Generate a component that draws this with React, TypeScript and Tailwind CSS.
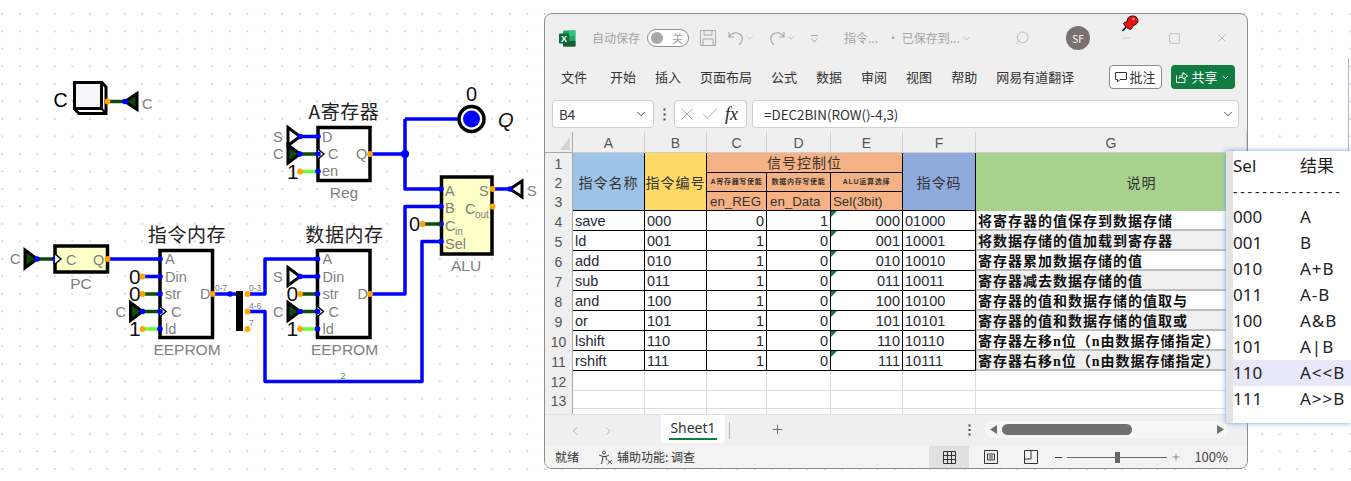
import React from 'react';
import { Check, ChevronDown, ChevronLeft, ChevronRight, Minus, Plus, Search, Square, X } from 'lucide-react';

const BLUE = '#0000ff';
const DARK = '#0b4a0b';
const LIME = '#66ff33';
const ORANGE = '#ffa500';
const GRAY = '#808080';
const CJK = '"Noto Sans CJK SC", sans-serif';
const SANS = '"Liberation Sans", sans-serif';

const Wire = ({ d, color = BLUE }: { d: string; color?: string }) => (
  <path d={d} fill="none" stroke={color} strokeWidth={3.5} strokeLinejoin="round" />
);
const In = ({ x, y }: { x: number; y: number }) => <circle cx={x} cy={y} r={2.8} fill={BLUE} />;
const Out = ({ x, y }: { x: number; y: number }) => <circle cx={x} cy={y} r={2.9} fill={ORANGE} />;
const Label = ({ x, y, t, size = 14.5, fill = GRAY, anchor = 'start', italic = false }: any) => (
  <text x={x} y={y} fontSize={size} fill={fill} textAnchor={anchor} fontFamily={SANS} fontStyle={italic ? 'italic' : 'normal'}>
    {t}
  </text>
);
const Title = ({ x, y, t }: { x: number; y: number; t: string }) => (
  <text x={x} y={y} fontSize={19} fill="#222" fontFamily={CJK} textAnchor="middle" letterSpacing={0.6}>
    {t}
  </text>
);

// gate pointing right, apex on the wire
const GateR = ({ x, y, fill, label }: { x: number; y: number; fill: string; label: string }) => (
  <g>
    <Label x={x - 27} y={y + 5} t={label} />
    <polygon points={`${x - 12},${y - 9} ${x},${y} ${x - 12},${y + 9}`} fill={fill} stroke="#000" strokeWidth={3} />
    <In x={x} y={y} />
  </g>
);
const GateL = ({ x, y, fill, label }: { x: number; y: number; fill: string; label: string }) => (
  <g>
    <polygon points={`${x + 12},${y - 8} ${x},${y} ${x + 12},${y + 8}`} fill={fill} stroke="#000" strokeWidth={3} />
    <In x={x} y={y} />
    <Label x={x + 17} y={y + 7} t={label} />
  </g>
);
const Notch = ({ x, y }: { x: number; y: number }) => (
  <polyline points={`${x},${y - 5} ${x + 6},${y} ${x},${y + 5}`} fill="#fff" stroke="#000" strokeWidth={1.4} />
);

const Eeprom = ({ x, title, din }: { x: number; title: string; din: React.ReactNode }) => (
  <g>
    <Title x={x + 27} y={242} t={title} />
    <rect x={x} y={250.5} width={52.5} height={87} fill="#fff" stroke="#000" strokeWidth={3.5} />
    <Wire d={`M${x - 17.5} 294H${x}`} color={DARK} />
    <Wire d={`M${x - 17.5} 311.5H${x}`} color={DARK} />
    <Wire d={`M${x - 17.5} 329H${x}`} color={LIME} />
    {din}
    <Label x={x - 31} y={301} t="0" size={21} fill="#111" />
    <Label x={x - 31} y={336} t="1" size={21} fill="#111" />
    <Out x={x - 17.5} y={294} />
    <Out x={x - 17.5} y={329} />
    <GateR x={x - 17.5} y={311.5} fill={DARK} label="C" />
    <Notch x={x} y={311.5} />
    {[259, 276.5, 294, 311.5, 329].map((y) => <In key={y} x={x} y={y} />)}
    <Label x={x + 5} y={264} t="A" />
    <Label x={x + 5} y={281.5} t="Din" />
    <Label x={x + 5} y={299} t="str" />
    <Label x={x + 11} y={316.5} t="C" />
    <Label x={x + 5} y={334} t="ld" />
    <Label x={x + 40} y={299} t="D" />
    <Out x={x + 52.5} y={294} />
    <Label x={x + 27} y={355} t="EEPROM" size={15.5} anchor="middle" />
  </g>
);

const Circuit = () => (
  <svg className="absolute left-0 top-0" width={1351} height={481}>
    <defs>
      <pattern id="dots" x={-6.45} y={5.05} width={17.5} height={17.5} patternUnits="userSpaceOnUse">
        <circle cx={8.75} cy={8.75} r={0.85} fill="#b4b4b4" />
      </pattern>
    </defs>
    <rect width={1351} height={481} fill="url(#dots)" />

    {/* clock block */}
    <Label x={53.5} y={107} t="C" size={19.5} fill="#000" />
    <path d="M74.5 82.5H102L106 87V113.5H79L74.5 109Z" fill="#fff" stroke="#000" strokeWidth={3} />
    <path d="M74.5 82.5H101.5V108.5H74.5Z" fill="#f5f5fa" stroke="#000" strokeWidth={3} />
    <path d="M101.5 108.5L106 113.5" stroke="#000" strokeWidth={2} />
    <Wire d="M107 101.5H125" color={DARK} />
    <Out x={107.5} y={101.5} />
    <GateL x={125} y={101.5} fill={DARK} label="C" />

    {/* PC */}
    <Wire d="M37 259H55" color={DARK} />
    <GateR x={37} y={259} fill={DARK} label="C" />
    <rect x={55} y={246} width={52.5} height={26} fill="#ffffc8" stroke="#000" strokeWidth={3.5} />
    <In x={55} y={259} />
    <Notch x={55} y={259} />
    <Label x={66} y={265} t="C" />
    <Label x={93} y={265} t="Q" />
    <Label x={81} y={289} t="PC" size={15.5} anchor="middle" />
    <Wire d="M108 259H160" />
    <Out x={107.5} y={259} />

    {/* wires between memories */}
    <Wire d="M160 276.5H142.5" />
    <Wire d="M212 294H237" />
    <Wire d="M248 294H265V259H317.5" />
    <Wire d="M248 311.5H265V381.5H422V241.5H441" />
    <Wire d="M370 294H405V206.5H441" />
    <Wire d="M370 154H405M405 119H460M405 119V189H441" />
    <Wire d="M492 189H510" />
    <Wire d="M300 276.5H317.5" />
    <Label x={343} y={379} t="2" size={9} fill="#22aa22" anchor="middle" />

    <Eeprom x={160} title="指令内存" din={<g><Label x={129} y={283.5} t="0" size={21} fill="#111" /><Out x={142.5} y={276.5} /></g>} />
    <Eeprom x={317.5} title="数据内存" din={<GateR x={300} y={276.5} fill="#fff" label="S" />} />

    {/* splitter */}
    <rect x={236} y={291} width={7} height={40} fill="#000" />
    <In x={230} y={294} />
    <Out x={247.5} y={294} />
    <Out x={247.5} y={311.5} />
    <Out x={247.5} y={329} />
    <Label x={215} y={291} t="0-7" size={8.5} />
    <Label x={249} y={291} t="0-3" size={8.5} />
    <Label x={249} y={309} t="4-6" size={8.5} />
    <Label x={249} y={326} t="7" size={8.5} />

    {/* register */}
    <Title x={344} y={119} t="A寄存器" />
    <rect x={318} y={127.5} width={52} height={53} fill="#fff" stroke="#000" strokeWidth={3.5} />
    <Wire d="M300 136.5H318" />
    <Wire d="M300 154H318" color={DARK} />
    <Wire d="M300 171.5H318" color={LIME} />
    <GateR x={300} y={136.5} fill="#fff" label="S" />
    <GateR x={300} y={154} fill={DARK} label="C" />
    <Label x={287} y={179} t="1" size={21} fill="#111" />
    <Out x={300} y={171.5} />
    <Notch x={318} y={154} />
    {[136.5, 154, 171.5].map((y) => <In key={y} x={318} y={y} />)}
    <Label x={322} y={142} t="D" />
    <Label x={328} y={159} t="C" />
    <Label x={322} y={176} t="en" />
    <Label x={356} y={159} t="Q" />
    <Out x={370} y={154} />
    <Label x={344} y={198} t="Reg" size={15.5} anchor="middle" />
    <circle cx={405} cy={154} r={4.2} fill={BLUE} />

    {/* output Q */}
    <text x={471.5} y={101} fontSize={20} fontFamily={SANS} textAnchor="middle" fill="#111">0</text>
    <circle cx={471.5} cy={119} r={12.5} fill="#fff" stroke="#000" strokeWidth={3.5} />
    <circle cx={471.5} cy={119} r={8.5} fill={BLUE} />
    <Label x={498} y={127} t="Q" size={20} fill="#111" italic />

    {/* ALU */}
    <rect x={441.5} y={177} width={50.5} height={77} fill="#ffffc8" stroke="#000" strokeWidth={3.5} />
    {[189, 206.5, 224, 241.5].map((y) => <In key={y} x={441} y={y} />)}
    <Wire d="M423 224H441" color={DARK} />
    <Out x={422.5} y={224} />
    <Label x={409} y={231} t="0" size={20} fill="#111" />
    <Label x={445} y={196} t="A" />
    <Label x={445} y={213} t="B" />
    <Label x={445} y={231} t="C" />
    <Label x={455} y={235} t="in" size={10} />
    <Label x={445} y={249} t="Sel" />
    <Label x={479} y={196} t="S" />
    <Label x={465} y={214} t="C" />
    <Label x={475} y={218} t="out" size={10} />
    <Out x={492.5} y={189} />
    <Out x={492.5} y={206.5} />
    <Label x={466} y={271} t="ALU" size={15.5} anchor="middle" />
    <GateL x={510} y={189} fill="#fff" label="S" />
  </svg>
);

const ExcelLogo = () => (
  <svg width={17} height={17} viewBox="0 0 17 17">
    <rect x={4} y={0.5} width={12.5} height={16} rx={1} fill="#21a366" />
    <rect x={10} y={0.5} width={6.5} height={5.3} fill="#33c481" />
    <rect x={4} y={5.8} width={6.2} height={5.4} fill="#107c41" />
    <rect x={10} y={11} width={6.5} height={5.5} fill="#185c37" />
    <rect x={4} y={11.2} width={6.2} height={5.3} fill="#185c37" />
    <rect x={0} y={3.5} width={10} height={10} rx={1} fill="#0f6b3a" />
    <text x={5} y={11.6} fontSize={9} fontWeight={700} fill="#fff" textAnchor="middle" fontFamily={SANS}>X</text>
  </svg>
);

const TitleBar = () => (
  <div className="flex h-[47px] items-center pl-[14px] pr-[18px] pt-[1px] text-[12px] text-[#a3a3a3]">
    <ExcelLogo />
    <span className="ml-[16px]">自动保存</span>
    <div className="ml-[7px] flex h-[18px] w-[42px] items-center justify-between rounded-full border border-[#8f8f8f] bg-white pl-[3px] pr-[5px] text-[11px]">
      <span className="h-[12px] w-[12px] rounded-full bg-[#a8a8a8]" />
      <span>关</span>
    </div>
    <svg className="ml-[11px]" width={16} height={16} viewBox="0 0 16 16" fill="none" stroke="#a8a8a8">
      <path d="M.5.5H15.5V15.5H.5ZM4 .5V5H12V.5M3 15.5V9H13V15.5" />
    </svg>
    <svg className="ml-[12px]" width={16} height={16} viewBox="0 0 16 16" fill="none" stroke="#a8a8a8" strokeWidth={1.2}>
      <path d="M1 2V7H6M1.5 6.5C4 2.5 9 1.5 12.5 4.5C15.5 7.5 14.5 12 11 15" />
    </svg>
    <ChevronDown className="ml-[1px]" size={10} strokeWidth={1.5} />
    <svg className="ml-[14px]" width={16} height={16} viewBox="0 0 16 16" fill="none" stroke="#a8a8a8" strokeWidth={1.2}>
      <path d="M15 2V7H10M14.5 6.5C12 2.5 7 1.5 3.5 4.5C.5 7.5 1.5 12 5 15" />
    </svg>
    <ChevronDown className="ml-[1px]" size={10} strokeWidth={1.5} />
    <svg className="ml-[14px]" width={9} height={9} viewBox="0 0 9 9" fill="none" stroke="#a8a8a8">
      <path d="M1 1.5H8M1.5 4.5L4.5 8L7.5 4.5" />
    </svg>
    <span className="ml-[25px]">指令...</span>
    <span className="ml-[9px]">• 已保存到...</span>
    <ChevronDown className="ml-[1px]" size={11} strokeWidth={1.5} />
    <div className="ml-auto flex items-center">
      <Search className="-scale-x-100" size={16} strokeWidth={1.2} color="#b0b0b0" />
      <span className="ml-[36px] flex h-[24px] w-[24px] items-center justify-center rounded-full bg-[#7a7070] text-[10px] text-white">SF</span>
      <Minus className="ml-[30px]" size={12} strokeWidth={1} color="#999" />
      <Square className="ml-[36px]" size={13} strokeWidth={1} color="#999" />
      <X className="ml-[34px]" size={14} strokeWidth={1} color="#999" />
    </div>
  </div>
);

const Ribbon = () => (
  <div className="flex h-[32px] items-center pl-[16px] pr-[12px] text-[13px] text-[#333]">
    <span className="mr-[23px]">文件</span>
    <div className="flex gap-[19px]">
      {['开始', '插入', '页面布局', '公式', '数据', '审阅', '视图', '帮助', '网易有道翻译'].map((t) => (
        <span key={t}>{t}</span>
      ))}
    </div>
    <div className="ml-auto flex h-[24px] w-[53px] items-center justify-center gap-[2px] rounded-[4px] border border-[#8a8a8a] bg-white text-[#333]">
      <svg width={12} height={12} viewBox="0 0 12 12" fill="none" stroke="#333">
        <path d="M.5 1.5H11.5V8.5H5L2.5 11V8.5H.5Z" />
      </svg>
      批注
    </div>
    <div className="ml-[9px] flex h-[24px] w-[64px] items-center justify-center gap-[3px] rounded-[4px] bg-[#107c41] text-white">
      <svg width={12} height={12} viewBox="0 0 12 12" fill="none" stroke="#fff">
        <path d="M.5 4.5V11.5H9V7M3 7.5C3.5 5 5 4 7 4V1.5L11.5 5L7 8V6C5.5 6 4 6.5 3 7.5Z" />
      </svg>
      共享
      <ChevronDown size={9} strokeWidth={2.5} />
    </div>
  </div>
);

const FormulaBar = () => (
  <div className="flex h-[39px] items-start pl-[7px] pr-[8px] pt-[7px] text-[13.4px] text-[#333]">
    <div className="flex h-[28px] w-[102px] items-center justify-between rounded-[4px] border border-[#d0d0d0] bg-white pl-[6px] pr-[5px]">
      B4
      <ChevronDown size={14} strokeWidth={1.5} />
    </div>
    <div className="flex h-[28px] w-[20px] items-center justify-center">
      <svg width={3} height={13} viewBox="0 0 3 13" fill="#444">
        <rect x={0.5} y={0.5} width={2} height={2} />
        <rect x={0.5} y={5.5} width={2} height={2} />
        <rect x={0.5} y={10.5} width={2} height={2} />
      </svg>
    </div>
    <div className="flex h-[28px] w-[73px] items-center rounded-[4px] border border-[#d0d0d0] bg-white pl-[2px]">
      <X size={20} strokeWidth={1} color="#9a9a9a" />
      <Check className="ml-[3px]" size={20} strokeWidth={1} color="#9a9a9a" />
      <span className="ml-[5px] text-[18px] italic text-[#222] [font-family:'Liberation_Serif',serif]">fx</span>
    </div>
    <div className="ml-[5px] flex h-[28px] flex-1 items-center justify-between rounded-[4px] border border-[#d0d0d0] bg-white pl-[11px] pr-[3px]">
      =DEC2BIN(ROW()-4,3)
      <ChevronDown size={14} strokeWidth={1.5} />
    </div>
  </div>
);

const rows = [
  ['save', '000', '0', '1', '000', '01000', '将寄存器的值保存到数据存储'],
  ['ld', '001', '1', '0', '001', '10001', '将数据存储的值加载到寄存器'],
  ['add', '010', '1', '0', '010', '10010', '寄存器累加数据存储的值'],
  ['sub', '011', '1', '0', '011', '10011', '寄存器减去数据存储的值'],
  ['and', '100', '1', '0', '100', '10100', '寄存器的值和数据存储的值取与'],
  ['or', '101', '1', '0', '101', '10101', '寄存器的值和数据存储的值取或'],
  ['lshift', '110', '1', '0', '110', '10110', '寄存器左移n位（n由数据存储指定）'],
  ['rshift', '111', '1', '0', '111', '10111', '寄存器右移n位（n由数据存储指定）'],
];

const RowNum = ({ n }: { n?: number }) => (
  <div className="flex items-center justify-center border-r border-[#a8a8a8] bg-[#efefef] pt-[2px] text-[14px] text-[#555]">{n}</div>
);
const Corner = () => <span className="absolute left-0 top-0 h-[6px] w-[6px] bg-[#107c41] [clip-path:polygon(0_0,100%_0,0_100%)]" />;

const Sheet = () => {
  const hd = 'flex items-center justify-center border-r border-b border-black text-[#333]';
  const data = 'relative flex items-center border-r border-b border-black px-[2px] pt-[2px] text-[14.5px] leading-none text-[#1f2a33] bg-white';
  const empty = 'border-r border-b border-[#dcdcdc] bg-white';
  return (
    <div className="grid h-[282px] grid-cols-[28px_72px_62px_60px_64px_72px_73px_1fr] grid-rows-[21px_20px_19px_19px_repeat(8,20px)_20px_18px_5px] overflow-hidden [font-family:'Liberation_Sans','Noto_Sans_CJK_SC',sans-serif]">
      <div className="flex items-center justify-end border-r border-b border-[#a8a8a8] bg-[#efefef] pr-[2px]">
        <svg width={10} height={18} viewBox="0 0 10 18"><polygon points="10,4 10,17 0,17" fill="#d4d4d4" /></svg>
      </div>
      {['A', 'B', 'C', 'D', 'E', 'F', 'G'].map((c) => (
        <div key={c} className="flex items-center justify-center border-r border-b border-[#d0d0d0] bg-[#efefef] pt-[2px] text-[14px] text-[#555]">{c}</div>
      ))}

      <RowNum n={1} />
      <div className={`${hd} row-span-3 bg-[#9dc3e6] pt-[3px] text-[14px] tracking-[1px]`}>指令名称</div>
      <div className={`${hd} row-span-3 bg-[#ffd966] pt-[3px] text-[14px] tracking-[1px]`}>指令编号</div>
      <div className={`${hd} col-span-3 bg-[#f4b183] pt-[2px] text-[14px] tracking-[1px]`}>信号控制位</div>
      <div className={`${hd} row-span-3 bg-[#8faadc] pt-[3px] text-[14px] tracking-[1px]`}>指令码</div>
      <div className="row-span-3 flex items-center justify-center bg-[#a9d18e] pl-[60px] pt-[3px] text-[14px] tracking-[1px] text-[#333]">说明</div>

      <RowNum n={2} />
      <div className={`${hd} bg-[#f4b183] text-[7px] font-bold tracking-[0.7px]`}>A寄存器写使能</div>
      <div className={`${hd} bg-[#f4b183] text-[7px] font-bold tracking-[0.7px]`}>数据内存写使能</div>
      <div className={`${hd} bg-[#f4b183] text-[7px] font-bold tracking-[0.7px]`}>ALU运算选择</div>

      <RowNum n={3} />
      <div className={`${hd} justify-start bg-[#f4b183] pl-[3px] pt-[2px] text-[13.3px]`}>en_REG</div>
      <div className={`${hd} justify-start bg-[#f4b183] pl-[3px] pt-[2px] text-[13.3px]`}>en_Data</div>
      <div className={`${hd} justify-start bg-[#f4b183] pl-[2px] pt-[2px] text-[13.3px]`}>Sel(3bit)</div>

      {rows.map((r, i) => (
        <React.Fragment key={r[0]}>
          <RowNum n={i + 4} />
          <div className={data}>{r[0]}</div>
          <div className={data}>{r[1]}</div>
          <div className={`${data} justify-end`}>{r[2]}</div>
          <div className={`${data} justify-end`}>{r[3]}</div>
          <div className={`${data} justify-end`}><Corner />{r[4]}</div>
          <div className={data}>{r[5]}</div>
          <div className={`flex items-center whitespace-nowrap border-b-2 border-l border-[#bdbdbd] pl-[1px] pt-[2px] text-[14px] font-bold tracking-[1px] text-[#111] [font-family:'Liberation_Serif','Noto_Sans_CJK_SC',serif] ${i % 2 ? 'bg-[#f0f0f0]' : 'bg-white'}`}>
            {r[6]}
          </div>
        </React.Fragment>
      ))}

      {[12, 13].map((n) => (
        <React.Fragment key={n}>
          <RowNum n={n} />
          {[0, 1, 2, 3, 4, 5, 6].map((c) => <div key={c} className={empty} />)}
        </React.Fragment>
      ))}
      <RowNum />
      {[0, 1, 2, 3, 4, 5, 6].map((c) => <div key={c} className="border-r border-[#dcdcdc] bg-white" />)}
    </div>
  );
};

const TabBar = () => (
  <div className="flex h-[32px] items-start border-t border-[#e2e2e2] bg-[#efefef]">
    <ChevronLeft className="ml-[23px] mt-[9px]" size={14} strokeWidth={1.2} color="#999" />
    <ChevronRight className="ml-[19px] mt-[9px]" size={14} strokeWidth={1.2} color="#999" />
    <div className="relative ml-[46px] flex h-[28px] w-[64px] items-start justify-center rounded-b-[4px] bg-white pt-[2px] text-[14px] text-[#333] [font-family:'Noto_Sans',sans-serif]">
      Sheet1
      <span className="absolute bottom-[3px] left-[8px] h-[2px] w-[48px] bg-[#107c41]" />
    </div>
    <span className="ml-[4px] mt-[7px] h-[17px] w-px bg-[#b4b4b4]" />
    <Plus className="ml-[40px] mt-[7px]" size={15} strokeWidth={1.1} color="#333" />
    <svg className="ml-[183px] mt-[9px]" width={3} height={12} viewBox="0 0 3 12" fill="#444">
      <rect x={0.5} y={0.5} width={2} height={2} />
      <rect x={0.5} y={5} width={2} height={2} />
      <rect x={0.5} y={9.5} width={2} height={2} />
    </svg>
    <div className="ml-[14px] mt-[6px] flex h-[17px] w-[243px] items-center rounded-full bg-[#f6f6f6] pl-[5px]">
      <svg width={7} height={9} viewBox="0 0 7 9"><polygon points="7,0 7,9 0,4.5" fill="#707070" /></svg>
      <span className="ml-[5px] h-[11px] w-[130px] rounded-full bg-[#707070]" />
      <svg className="ml-[85px]" width={7} height={9} viewBox="0 0 7 9"><polygon points="0,0 0,9 7,4.5" fill="#707070" /></svg>
    </div>
  </div>
);

const StatusBar = () => (
  <div className="flex h-[22px] items-center bg-[#f3f3f3] pl-[10px] text-[12px] text-[#333]">
    <span>就绪</span>
    <svg className="ml-[19px]" width={15} height={15} viewBox="0 0 15 15" fill="none" stroke="#444">
      <circle cx={6} cy={2.5} r={1.5} />
      <path d="M1 5L5 6.5H8L11 5M5 7L3.5 14M8 7L8.5 10M9.5 10L14 14M14 10L9.5 14" />
    </svg>
    <span className="ml-[4px]">辅助功能: 调查</span>
    <div className="ml-auto flex h-full items-center">
      <div className="flex h-full w-[40px] items-center justify-center bg-[#e0e0e0]">
        <svg width={13} height={13} viewBox="0 0 13 13" fill="none" stroke="#333">
          <path d="M.5.5H12.5V12.5H.5ZM4.5.5V12.5M8.5.5V12.5M.5 4.5H12.5M.5 8.5H12.5" />
        </svg>
      </div>
      <svg className="ml-[15px]" width={14} height={14} viewBox="0 0 14 14" fill="none" stroke="#333">
        <path d="M.5.5H13.5V13.5H.5ZM3.5 4H10.5V10H3.5ZM5 6H9M5 8H9" />
      </svg>
      <svg className="ml-[26px]" width={14} height={14} viewBox="0 0 14 14" fill="none" stroke="#333">
        <path d="M.5.5H13.5V13.5H.5ZM.5 9H7V.5" />
      </svg>
      <span className="ml-[17px] h-px w-[7px] bg-[#333]" />
      <div className="relative ml-[5px] h-px w-[100px] bg-[#666]">
        <span className="absolute left-[48px] top-[-5px] h-[11px] w-[5px] bg-[#666]" />
      </div>
      <Plus className="ml-[4px]" size={10} strokeWidth={1.2} color="#333" />
      <span className="ml-[13px] mr-[19px] text-[13px] text-[#444]">100%</span>
    </div>
  </div>
);

const sel = [
  ['000', 'A'],
  ['001', 'B'],
  ['010', 'A+B'],
  ['011', 'A-B'],
  ['100', 'A&B'],
  ['101', 'A|B'],
  ['110', 'A<<B'],
  ['111', 'A>>B'],
];

const SelPopup = () => (
  <div className="absolute left-[1226px] top-[151px] h-[272px] w-[125px] border-l-[7px] border-[#e3e3e3] bg-white text-[17px] text-[#222] shadow-[0_0_5px_#6f9fe0] [font-family:'Noto_Sans','Noto_Sans_CJK_SC',sans-serif]">
    <div className="flex h-[30px] items-center">
      <span className="w-[67px]">Sel</span>
      <span>结果</span>
    </div>
    <div className="mb-[3px] h-[20px] overflow-hidden whitespace-nowrap pt-px text-[14px] leading-[20px] tracking-[2.8px]">---------------</div>
    {sel.map(([a, b]) => (
      <div key={a} className={`flex h-[26px] items-center ${a === '110' ? 'bg-[#e8e8fa]' : ''}`}>
        <span className="w-[67px]">{a}</span>
        <span className="tracking-[1px]">{b}</span>
      </div>
    ))}
  </div>
);

const Pushpin = () => (
  <svg className="absolute left-[1121px] top-[15px]" width={18} height={17} viewBox="0 0 18 17">
    <path d="M1.5 16L5 12" stroke="#111" strokeWidth={1.5} />
    <path d="M2.5 8.5C3.5 7 5 7 6 7C6 4 7.5 1.5 10.5 1C14 .5 17 2.5 17 5.5C17 8 15 10 12 10.5C12 12 11 13.5 9.5 14.5C7 14 4 11.5 2.5 8.5Z" fill="#ee1111" stroke="#111" />
    <circle cx={12.5} cy={4} r={1.3} fill="#ff9090" />
  </svg>
);

export default function App() {
  return (
    <div className="relative h-[481px] w-[1351px] overflow-hidden bg-white [font-family:'Noto_Sans_CJK_SC',sans-serif]">
      <Circuit />
      <div className="absolute left-[544px] top-[13px] flex h-[456px] w-[704px] flex-col overflow-hidden rounded-[8px] border border-[#8c8c8c] bg-[#efefef]">
        <TitleBar />
        <Ribbon />
        <FormulaBar />
        <Sheet />
        <TabBar />
        <StatusBar />
      </div>
      <Pushpin />
      <span className="absolute left-[1348px] top-[58px] h-[93px] w-px bg-[#a8b8d8]" />
      <SelPopup />
    </div>
  );
}
